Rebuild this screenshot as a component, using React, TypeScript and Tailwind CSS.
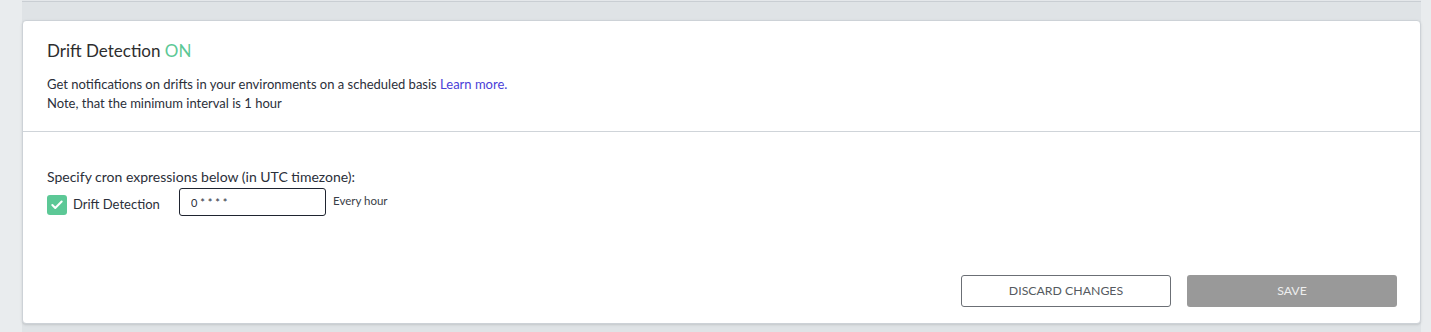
import { Check } from "lucide-react";

export default function App() {
  return (
    <div
      className="h-[332px] w-full overflow-hidden bg-[#e9ecee] pl-[22px] pr-[10px] text-[#2b2f3a]"
      style={{ fontFamily: "Lato, 'Liberation Sans', sans-serif" }}
    >
      <div className="h-full bg-[#dfe3e6]">
        {/* bottom edge of the previous card */}
        <div className="h-[2px] border-b border-[#c9ced3] bg-[#e4e7ea]" />

        <div className="mt-[18px] h-[304px] rounded-[4px] border border-[#cdd2d7] bg-white shadow-sm">
          {/* Header */}
          <div className="h-[111px] border-b border-[#cfd4d9] px-6 pt-[20px]">
            <h2 className="text-[17px] leading-[20px] text-[#2e2e2e]">
              Drift Detection <span className="text-[#5cc896]">ON</span>
            </h2>
            <p className="mt-[14px] text-[13px] leading-[19px]">
              Get notifications on drifts in your environments on a scheduled basis{" "}
              <a className="text-[#4a40d8]" href="#">
                Learn more.
              </a>
            </p>
            <p className="text-[13px] leading-[19px]">
              Note, that the minimum interval is 1 hour
            </p>
          </div>

          {/* Body */}
          <div className="px-6 pt-[36px]">
            <div className="text-[14px] leading-[18px]">
              Specify cron expressions below (in UTC timezone):
            </div>
            <div className="mt-[2px] flex items-center">
              <label className="flex w-[132px] items-center gap-[6px] pt-[5px]">
                <span className="flex h-[20px] w-[20px] items-center justify-center rounded-[3px] bg-[#5cc896]">
                  <Check size={14} strokeWidth={3.5} className="text-white" />
                </span>
                <span className="text-[13px]">Drift Detection</span>
              </label>
              <input
                readOnly
                value="0 * * * *"
                className="h-[28px] w-[147px] rounded-[3px] border border-[#1f2430] px-[11px] text-[11px] text-[#2b2f3a] outline-none"
              />
              <span className="ml-[7px] -mt-[2px] text-[11.5px] text-[#3a3e48]">
                Every hour
              </span>
            </div>

            <div className="-mr-[1px] mt-[59px] flex justify-end gap-4">
              <button className="h-[32px] w-[210px] rounded-[3px] border border-[#6b6f75] text-[12.3px] text-[#555a60]">
                DISCARD CHANGES
              </button>
              <button className="h-[32px] w-[210px] rounded-[3px] bg-[#999999] text-[12.3px] text-[#eeeeee]">
                SAVE
              </button>
            </div>
          </div>
        </div>
      </div>
    </div>
  );
}
